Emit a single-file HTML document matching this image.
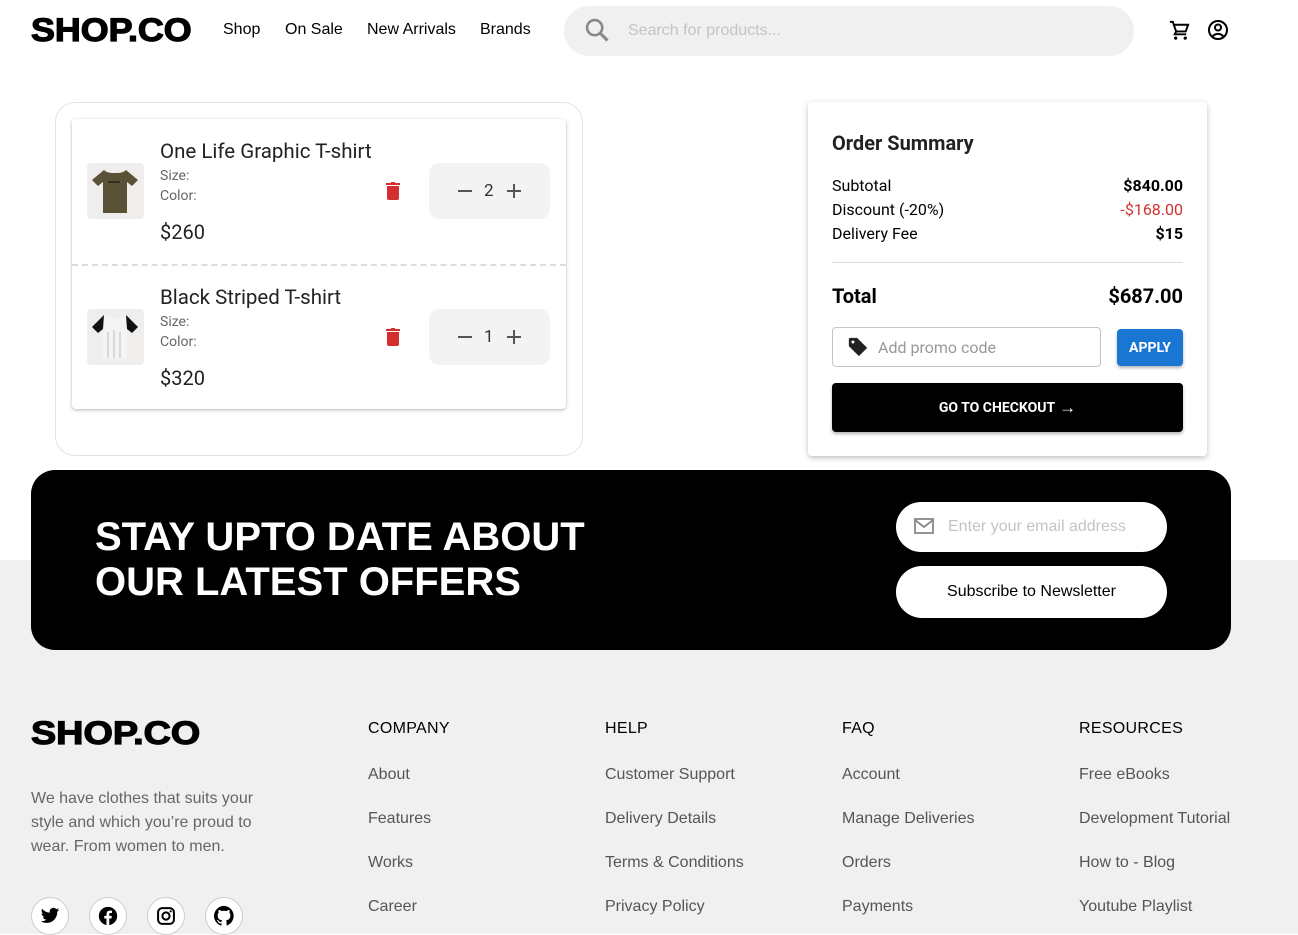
<!DOCTYPE html>
<html><head><meta charset="utf-8"><style>
*{box-sizing:border-box;margin:0;padding:0}
body{width:1298px;height:934px;overflow:hidden;background:#fff;font-family:"Liberation Sans",Arial,sans-serif;position:relative;color:#000}
.a{position:absolute}
.logo{font-family:"Liberation Sans",Arial,sans-serif;font-weight:900;font-size:32px;letter-spacing:0;-webkit-text-stroke:1.2px #000;transform-origin:left top}
.nav{font-size:16px;top:21px;color:#000}
.rob{font-family:"Roboto","Liberation Sans",Arial,sans-serif}
.qty{background:#f3f3f3;border-radius:10px;width:121px;height:56px;left:429px}
.trash{width:14px;height:18px}
.row{left:832px;width:351px;font-size:16px;display:flex;justify-content:space-between}
.fh{font-size:16px;top:720px;letter-spacing:.3px}
.fl{font-size:16px;color:#555}
.soc{width:38px;height:38px;border-radius:50%;border:1px solid #ccc;background:#fff;top:897px;display:flex;align-items:center;justify-content:center}
</style></head><body>
<div class="a logo" style="left:31px;top:12px;transform:scaleX(1.12)">SHOP.CO</div>
<div class="a nav" style="left:223px">Shop</div>
<div class="a nav" style="left:285px">On Sale</div>
<div class="a nav" style="left:367px">New Arrivals</div>
<div class="a nav" style="left:480px">Brands</div>
<div class="a" style="left:564px;top:6px;width:570px;height:50px;border-radius:25px;background:#f0f0f0"></div>
<svg class="a" style="left:583px;top:16px" width="28" height="28" viewBox="0 0 24 24"><circle cx="10" cy="10" r="6.5" fill="none" stroke="#888" stroke-width="2.2"/><path d="M15 15l6 6" stroke="#888" stroke-width="2.6"/></svg>
<div class="a" style="left:628px;top:22px;font-size:16px;color:#c4c4c4">Search for products...</div>
<svg class="a" style="left:1168px;top:19px" width="23" height="23" viewBox="0 0 24 24"><path d="M2 3h3l3.5 10h10l2.5-7H6.5" fill="none" stroke="#000" stroke-width="2"/><path d="M8.5 13l-1.5 3h12" fill="none" stroke="#000" stroke-width="2"/><circle cx="8" cy="20" r="1.7"/><circle cx="18" cy="20" r="1.7"/></svg>
<svg class="a" style="left:1206px;top:18px" width="24" height="24" viewBox="0 0 24 24"><circle cx="12" cy="12" r="9" fill="none" stroke="#000" stroke-width="2"/><circle cx="12" cy="9.5" r="3" fill="none" stroke="#000" stroke-width="2"/><path d="M6.5 18.5c3-3.5 8-3.5 11 0" fill="none" stroke="#000" stroke-width="2"/></svg>

<div class="a" style="left:55px;top:102px;width:528px;height:354px;border:1px solid #e3e3e3;border-radius:20px"></div>
<div class="a" style="left:72px;top:119px;width:494px;height:290px;background:#fff;border-radius:4px;box-shadow:0 1px 3px rgba(0,0,0,.3)"></div>
<div class="a" style="left:72px;top:264px;width:494px;border-top:2px dashed #ddd"></div>

<div class="a" style="left:87px;top:163px;width:57px;height:56px;background:#efeeec;border-radius:4px"></div>
<svg class="a" style="left:90px;top:168px" width="50" height="46" viewBox="0 0 50 46"><path d="M14 2l-12 10 6 6 5-4v31h24V14l5 4 6-6-12-10c-3 3-7 3-11 3s-8 0-11-3z" fill="#5a5236"/><path d="M18 14h12" stroke="#222" stroke-width="1.5"/></svg>
<div class="a" style="left:87px;top:309px;width:57px;height:56px;background:#efeeec;border-radius:4px"></div>
<svg class="a" style="left:90px;top:312px" width="50" height="50" viewBox="0 0 50 50"><path d="M14 3l-12 12 6 6 5-4v30h24V17l5 4 6-6-12-12c-3 2-7 3-11 3s-8-1-11-3z" fill="#f4f4f6"/><path d="M14 3l-12 12 6 6 5-4zM36 3l12 12-6 6-5-4z" fill="#111"/><path d="M18 20v26M24 18v28M30 20v26" stroke="#bbb"/></svg>

<div class="a rob" style="left:160px;top:140px;font-size:20.5px;color:#222">One Life Graphic T-shirt</div>
<div class="a rob" style="left:160px;top:168px;font-size:14px;color:#666">Size:</div>
<div class="a rob" style="left:160px;top:188px;font-size:14px;color:#666">Color:</div>
<div class="a rob" style="left:160px;top:220px;font-size:20px;color:#222">$260</div>
<div class="a rob" style="left:160px;top:286px;font-size:20.5px;color:#222">Black Striped T-shirt</div>
<div class="a rob" style="left:160px;top:314px;font-size:14px;color:#666">Size:</div>
<div class="a rob" style="left:160px;top:334px;font-size:14px;color:#666">Color:</div>
<div class="a rob" style="left:160px;top:366px;font-size:20px;color:#222">$320</div>

<svg class="a trash" style="left:386px;top:182px" viewBox="0 0 14 18"><rect x="0" y="1" width="14" height="2" fill="#d32f2f"/><rect x="5" y="0" width="4" height="2" fill="#d32f2f"/><path d="M1 4h12v12a2 2 0 0 1-2 2H3a2 2 0 0 1-2-2z" fill="#d32f2f"/></svg>
<svg class="a trash" style="left:386px;top:328px" viewBox="0 0 14 18"><rect x="0" y="1" width="14" height="2" fill="#d32f2f"/><rect x="5" y="0" width="4" height="2" fill="#d32f2f"/><path d="M1 4h12v12a2 2 0 0 1-2 2H3a2 2 0 0 1-2-2z" fill="#d32f2f"/></svg>

<div class="a qty" style="top:163px"></div>
<div class="a qty" style="top:309px"></div>
<div class="a" style="left:458px;top:190px;width:14px;height:2px;background:#555"></div>
<div class="a rob" style="left:484px;top:181px;font-size:17px;color:#333">2</div>
<div class="a" style="left:507px;top:190px;width:14px;height:2px;background:#555"></div><div class="a" style="left:513px;top:184px;width:2px;height:14px;background:#555"></div>
<div class="a" style="left:458px;top:336px;width:14px;height:2px;background:#555"></div>
<div class="a rob" style="left:484px;top:327px;font-size:17px;color:#333">1</div>
<div class="a" style="left:507px;top:336px;width:14px;height:2px;background:#555"></div><div class="a" style="left:513px;top:330px;width:2px;height:14px;background:#555"></div>

<div class="a" style="left:808px;top:102px;width:399px;height:354px;background:#fff;border-radius:4px;box-shadow:0 2px 6px rgba(0,0,0,.25)"></div>
<div class="a rob" style="left:832px;top:131px;font-size:20px;font-weight:bold;color:#222">Order Summary</div>
<div class="a row rob" style="top:176px"><span>Subtotal</span><b>$840.00</b></div>
<div class="a row rob" style="top:200px"><span>Discount (-20%)</span><span style="color:#d32f2f">-$168.00</span></div>
<div class="a row rob" style="top:224px"><span>Delivery Fee</span><b>$15</b></div>
<div class="a" style="left:832px;top:262px;width:351px;border-top:1px solid #ddd"></div>
<div class="a row rob" style="top:284px;font-size:20px;font-weight:bold"><span>Total</span><span>$687.00</span></div>
<div class="a" style="left:832px;top:327px;width:269px;height:40px;border:1px solid #c4c4c4;border-radius:4px"></div>
<svg class="a" style="left:847px;top:336px" width="22" height="22" viewBox="0 0 24 24"><path d="M2 3v8l11 11 9-9L11 2H3z" fill="#222"/><circle cx="6.5" cy="6.5" r="1.6" fill="#fff"/></svg>
<div class="a rob" style="left:878px;top:338px;font-size:16px;color:#999">Add promo code</div>
<div class="a rob" style="left:1117px;top:329px;width:66px;height:37px;background:#1976d2;border-radius:4px;color:#fff;font-size:14px;font-weight:bold;display:flex;align-items:center;justify-content:center;box-shadow:0 2px 3px rgba(0,0,0,.3)">APPLY</div>
<div class="a rob" style="left:832px;top:383px;width:351px;height:49px;background:#000;border-radius:4px;color:#fff;font-size:14px;font-weight:bold;display:flex;align-items:center;justify-content:center;box-shadow:0 2px 3px rgba(0,0,0,.3)">GO TO CHECKOUT <span style="font-size:17px;margin-left:4px">→</span></div>

<div class="a" style="left:0;top:560px;width:1298px;height:374px;background:#f0f0f0"></div>
<div class="a" style="left:31px;top:470px;width:1200px;height:180px;background:#000;border-radius:24px"></div>
<div class="a" style="left:95px;top:515px;font-size:40px;font-weight:900;color:#fff;line-height:45px;letter-spacing:0">STAY UPTO DATE ABOUT<br>OUR LATEST OFFERS</div>
<div class="a" style="left:896px;top:502px;width:271px;height:50px;background:#fff;border-radius:25px"></div>
<svg class="a" style="left:914px;top:518px" width="20" height="16" viewBox="0 0 20 16"><rect x="1" y="1" width="18" height="14" fill="none" stroke="#888" stroke-width="1.8"/><path d="M1 2l9 7 9-7" fill="none" stroke="#888" stroke-width="1.8"/></svg>
<div class="a" style="left:948px;top:518px;font-size:16px;color:#c4c4c4">Enter your email address</div>
<div class="a" style="left:896px;top:566px;width:271px;height:52px;background:#fff;border-radius:26px;font-size:16px;display:flex;align-items:center;justify-content:center">Subscribe to Newsletter</div>

<div class="a logo" style="left:31px;top:715px;transform:scaleX(1.18)">SHOP.CO</div>
<div class="a" style="left:31px;top:787px;width:240px;font-size:16px;color:#666;line-height:24px">We have clothes that suits your style and which you’re proud to wear. From women to men.</div>

<div class="a fh" style="left:368px">COMPANY</div>
<div class="a fh" style="left:605px">HELP</div>
<div class="a fh" style="left:842px">FAQ</div>
<div class="a fh" style="left:1079px">RESOURCES</div>
<div class="a fl" style="left:368px;top:766px">About</div>
<div class="a fl" style="left:368px;top:810px">Features</div>
<div class="a fl" style="left:368px;top:854px">Works</div>
<div class="a fl" style="left:368px;top:898px">Career</div>
<div class="a fl" style="left:605px;top:766px">Customer Support</div>
<div class="a fl" style="left:605px;top:810px">Delivery Details</div>
<div class="a fl" style="left:605px;top:854px">Terms &amp; Conditions</div>
<div class="a fl" style="left:605px;top:898px">Privacy Policy</div>
<div class="a fl" style="left:842px;top:766px">Account</div>
<div class="a fl" style="left:842px;top:810px">Manage Deliveries</div>
<div class="a fl" style="left:842px;top:854px">Orders</div>
<div class="a fl" style="left:842px;top:898px">Payments</div>
<div class="a fl" style="left:1079px;top:766px">Free eBooks</div>
<div class="a fl" style="left:1079px;top:810px">Development Tutorial</div>
<div class="a fl" style="left:1079px;top:854px">How to - Blog</div>
<div class="a fl" style="left:1079px;top:898px">Youtube Playlist</div>

<div class="a soc" style="left:31px"><svg width="20" height="20" viewBox="0 0 24 24"><path d="M23 4.5c-.8.4-1.7.6-2.6.7.9-.6 1.6-1.4 2-2.5-.9.5-1.9.9-2.900 1.100A4.500 4.500 0 0 0 11.800 8 12.800 12.800 0 0 1 2.500 3.300a4.500 4.500 0 0 0 1.400 6 4.500 4.500 0 0 1-2-.600 4.500 4.500 0 0 0 3.600 4.500 4.500 4.500 0 0 1-2 .100 4.500 4.500 0 0 0 4.200 3.100A9 9 0 0 1 1 18.300 12.800 12.800 0 0 0 7.900 20.300c8.300 0 12.800-6.900 12.800-12.800v-.600c.900-.600 1.600-1.400 2.300-2.400z"/></svg></div>
<div class="a soc" style="left:89px"><svg width="20" height="20" viewBox="0 0 24 24"><circle cx="12" cy="12" r="11"/><path d="M13.5 23v-8h2.7l.4-3.2h-3.1V9.9c0-.9.3-1.5 1.6-1.5h1.7V5.6a22 22 0 0 0-2.5-.1c-2.4 0-4.1 1.5-4.1 4.2v2.1H7.5V15h2.7v8z" fill="#fff"/></svg></div>
<div class="a soc" style="left:147px"><svg width="20" height="20" viewBox="0 0 24 24"><rect x="2.5" y="2.5" width="19" height="19" rx="5" fill="none" stroke="#000" stroke-width="2.4"/><circle cx="12" cy="12" r="4.3" fill="none" stroke="#000" stroke-width="2.4"/><circle cx="17.6" cy="6.4" r="1.3"/></svg></div>
<div class="a soc" style="left:205px"><svg width="22" height="22" viewBox="0 0 24 24"><path d="M12 1a11 11 0 0 0-3.5 21.4c.6.1.8-.2.8-.5v-2c-3.1.7-3.7-1.4-3.7-1.4-.5-1.3-1.2-1.6-1.2-1.6-1-.7.1-.7.1-.7 1.1.1 1.7 1.1 1.7 1.1 1 1.7 2.6 1.2 3.2.9.1-.7.4-1.2.7-1.5-2.4-.3-5-1.2-5-5.4 0-1.2.4-2.2 1.1-2.9-.1-.3-.5-1.4.1-2.9 0 0 .9-.3 3 1.1a10.4 10.4 0 0 1 5.5 0c2.1-1.4 3-1.100 3-1.100.6 1.500.2 2.600.1 2.900.7.8 1.100 1.700 1.100 2.900 0 4.200-2.600 5.100-5 5.400.4.3.8 1 .8 2v3c0 .3.2.6.8.5A11 11 0 0 0 12 1z"/></svg></div>
</body></html>
